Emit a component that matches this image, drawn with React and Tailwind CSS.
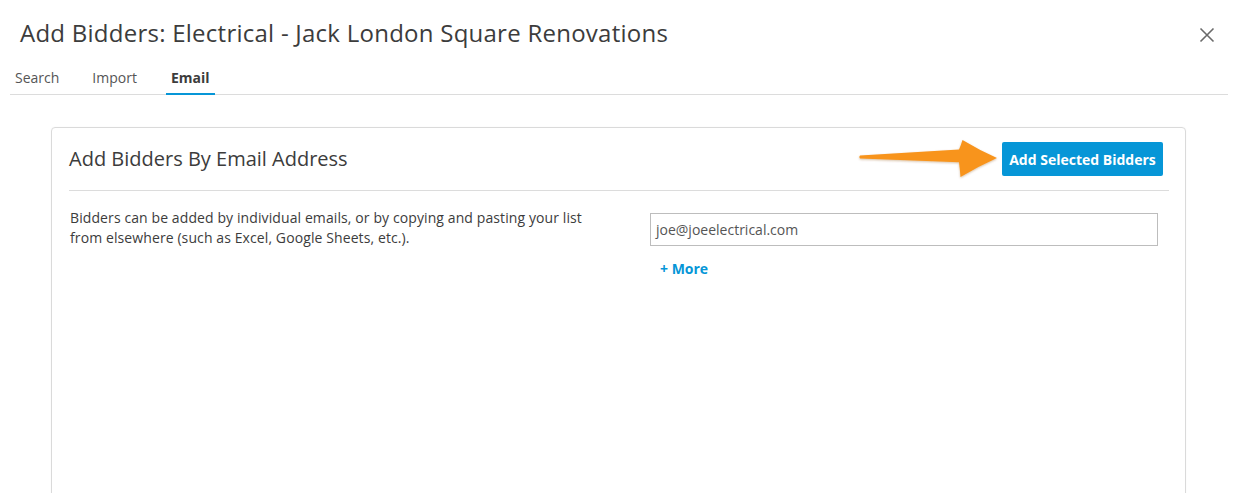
import React from 'react';

const font = { fontFamily: '"Open Sans", Roboto, sans-serif' };

const CloseIcon = () => (
  <svg width="16" height="16" viewBox="0 0 16 16" className="text-[#6a6a6a]">
    <path d="M1.5 1.5 L14.5 14.5 M14.5 1.5 L1.5 14.5" stroke="currentColor" strokeWidth="1.6" fill="none" />
  </svg>
);

// orange callout arrow pointing at the button
const Arrow = () => (
  <svg
    width="146"
    height="44"
    viewBox="0 0 146 44"
    className="absolute left-[855px] top-[137px] pointer-events-none"
  >
    <defs>
      <filter id="sh" x="-10%" y="-20%" width="120%" height="150%">
        <feDropShadow dx="0" dy="1" stdDeviation="0.8" floodColor="#8a4b00" floodOpacity="0.35" />
      </filter>
    </defs>
    <path
      d="M5 18.6 L104 12.6 Q106 8 107.5 3 Q124 13 142 21 Q124 29 105.5 40 Q105 33 104 25.2 L5 21.6 Q3.5 20.1 5 18.6 Z"
      fill="#f8941c"
      filter="url(#sh)"
    />
  </svg>
);

export default function App() {
  return (
    <div className="relative w-[1238px] h-[493px] overflow-hidden bg-white text-[#3c3c3c]" style={font}>
      {/* header */}
      <div className="flex items-center justify-between pl-[20px] pr-[23px] pt-[17px]">
        <h1 className="text-[24px] font-normal leading-[32px] tracking-[0.25px] text-[#3c3c3c]">
          Add Bidders: Electrical - Jack London Square Renovations
        </h1>
        <button className="mt-[3px]">
          <CloseIcon />
        </button>
      </div>

      {/* tabs */}
      <div className="mx-[10px] mt-[17px] flex border-b border-[#dcdcdc] pl-[5px] text-[14px]">
        <div className="mr-[33px] pt-[1px] pb-[6px] text-[#555]">Search</div>
        <div className="mr-[29px] pt-[1px] pb-[6px] text-[#555]">Import</div>
        <div className="-mb-px border-b-2 border-[#0696d7] px-[5px] pt-[1px] pb-[5px] font-bold text-[#3c3c3c]">Email</div>
      </div>

      {/* card */}
      <div className="mx-[51px] mr-[52px] mt-[32px] h-[400px] rounded-t-[4px] border border-[#dadada] px-[17px] pr-[16px] shadow-[0_0_2px_rgba(0,0,0,0.04)]">
        <div className="flex items-center justify-between border-b border-[#dcdcdc] pt-[14px] pb-[14px]">
          <h2 className="text-[20px] font-normal leading-[26px] text-[#3c3c3c]">Add Bidders By Email Address</h2>
          <button className="mr-[6px] h-[34px] w-[161px] rounded-[2px] bg-[#0696d7] text-[14px] font-bold text-white">
            Add Selected Bidders
          </button>
        </div>

        <div className="flex">
          <div className="w-[581px] pt-[17px] pr-[50px]">
            <p className="pl-[1px] text-[14px] leading-[20px] tracking-[0.1px] text-[#3c3c3c]">
              Bidders can be added by individual emails, or by copying and pasting your list from elsewhere (such as Excel, Google Sheets, etc.).
            </p>
          </div>
          <div className="w-[508px] pt-[22px]">
            <div className="flex h-[33px] items-center border border-[#bdbdbd] px-[5px] text-[14px] text-[#555]">
              joe@joeelectrical.com
            </div>
            <div className="mt-[13px] pl-[10px] text-[14px] font-bold leading-[20px] text-[#0696d7]">+ More</div>
          </div>
        </div>
      </div>

      <Arrow />
    </div>
  );
}
